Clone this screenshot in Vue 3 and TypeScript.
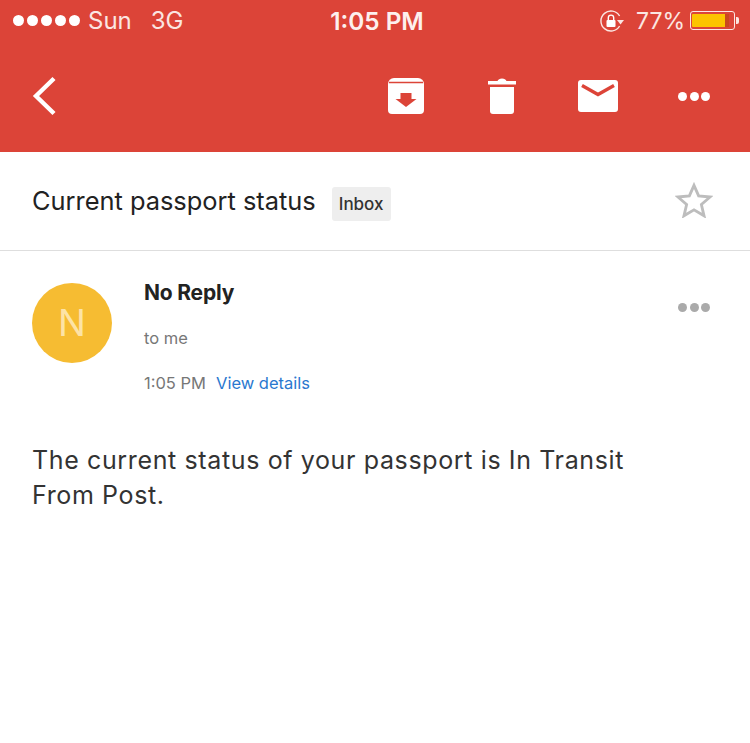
<script setup lang="ts">
const signalDots = [1, 2, 3, 4, 5]
const moreDots = [1, 2, 3]
</script>

<template>
  <div class="screen">
    <header class="top">
      <div class="status">
        <div class="status-left">
          <span class="signal"><i v-for="d in signalDots" :key="d"></i></span>
          <span class="carrier">Sun</span>
          <span class="network">3G</span>
        </div>
        <div class="clock">1:05 PM</div>
        <div class="status-right">
          <svg class="rotation" width="24" height="22" viewBox="0 0 24 22">
            <path d="M19.6 6A10 10 0 1 0 19.6 16" fill="none" stroke="#fbe6e2" stroke-width="1.400" />
            <path d="M17 10h7l-3.500 4.500z" fill="#fbe6e2" />
            <rect x="6.500" y="10" width="9" height="7" rx="1" fill="#fff" />
            <path d="M8.300 10V7.800a2.700 2.700 0 0 1 5.400 0V10" fill="none" stroke="#fff" stroke-width="1.400" />
          </svg>
          <span class="percent">77%</span>
          <span class="battery"><span class="level"></span></span>
          <span class="nub"></span>
        </div>
      </div>
      <div class="toolbar">
        <svg class="back" width="24" height="40" viewBox="0 0 24 40">
          <path d="M22 2.500 4 20l18 17.500" fill="none" stroke="#fff" stroke-width="4.400" />
        </svg>
        <div class="actions">
          <svg class="archive" width="36" height="36" viewBox="0 0 36 36">
            <path d="M6 0h24a6 6 0 0 1 6 6v26a4 4 0 0 1-4 4H4a4 4 0 0 1-4-4V6a6 6 0 0 1 6-6z" fill="#fff" />
            <path d="M1 4.500h34" stroke="#dc4438" stroke-width="1.600" />
            <path d="M12.500 15h11v6h5L18 29 7.500 21h5z" fill="#dc4438" />
          </svg>
          <svg class="trash" width="28" height="36" viewBox="0 0 28 36">
            <path d="M0 3h9.500q1-2.500 4.500-2.500T18.500 3H28v3.600H0z" fill="#fff" />
            <path d="M2 9h24v24a3 3 0 0 1-3 3H5a3 3 0 0 1-3-3z" fill="#fff" />
          </svg>
          <svg class="mail" width="40" height="32" viewBox="0 0 40 32">
            <rect width="40" height="32" rx="3" fill="#fff" />
            <path d="M4 5.500 20 14.500l16-9" fill="none" stroke="#dc4438" stroke-width="3.400" />
          </svg>
          <span class="dots"><i v-for="d in moreDots" :key="d"></i></span>
        </div>
      </div>
    </header>

    <section class="subject">
      <h1>Current passport status</h1>
      <span class="chip">Inbox</span>
      <svg class="star" width="38" height="36" viewBox="0 0 40 38">
        <path d="M20 3.500l4.900 11.200 12.100 1.100-9.200 8 2.800 11.900L20 29.400 9.400 35.700l2.800-11.900-9.200-8 12.100-1.100z" fill="none" stroke="#bdbdbd" stroke-width="3" />
      </svg>
    </section>

    <section class="message">
      <div class="avatar">N</div>
      <div class="meta">
        <div class="sender">No Reply</div>
        <div class="to">to me</div>
        <div class="when">1:05 PM<a class="details">View details</a></div>
      </div>
      <span class="dots grey"><i v-for="d in moreDots" :key="d"></i></span>
    </section>

    <p class="body">The current status of your passport is In Transit<br />From Post.</p>
  </div>
</template>

<style scoped>
.screen {
  width: 750px;
  height: 743px;
  overflow: hidden;
  background: #fff;
  font-family: Inter, "Liberation Sans", sans-serif;
  color: #222;
}

.top {
  background: #dc4438;
  height: 152px;
  color: #fbe6e2;
}

.status {
  height: 41px;
  display: grid;
  grid-template-columns: 1fr auto 1fr;
  align-items: center;
  font-size: 24px;
  padding: 0 11px 0 13px;
}

.status-left,
.status-right,
.signal {
  display: flex;
  align-items: center;
}

.signal {
  gap: 3px;
}

.signal i {
  width: 11px;
  height: 11px;
  border-radius: 50%;
  background: #fff;
}

.carrier {
  margin-left: 8px;
}

.network {
  margin-left: 19px;
}

.clock {
  padding-left: 2px;
  font-size: 24.300px;
  font-weight: 600;
  color: #fdf0ee;
}

.status-right {
  justify-content: flex-end;
}

.percent {
  margin-left: 12px;
  font-size: 23px;
}

.battery {
  margin-left: 5px;
  width: 45px;
  height: 19px;
  box-sizing: border-box;
  border: 1px solid #fbe6e2;
  border-radius: 3px;
  padding: 2px 2px 2px 1px;
}

.level {
  display: block;
  width: 33px;
  height: 100%;
  background: #fcc400;
  border-right: 4px solid #c9481f;
  border-radius: 1px 0 0 1px;
}

.nub {
  width: 3px;
  height: 7px;
  margin-left: 1px;
  background: #fbe6e2;
  border-radius: 0 2px 2px 0;
}

.toolbar {
  display: flex;
  align-items: center;
  justify-content: space-between;
  padding: 35px 40px 0 32px;
}

.actions {
  display: flex;
  align-items: center;
  gap: 64px;
}

.dots {
  display: flex;
  gap: 2.500px;
}

.dots i {
  width: 9px;
  height: 9px;
  border-radius: 50%;
  background: #fff;
}

.actions .trash {
  margin-right: -2px;
}

.actions .dots {
  margin-left: -4px;
}

.subject {
  height: 99px;
  box-sizing: border-box;
  border-bottom: 1px solid #dedede;
  display: flex;
  align-items: center;
  padding: 0 37px 2px 32px;
}

.subject h1 {
  margin: 0;
  font-size: 25.400px;
  font-weight: 400;
  color: #222;
}

.chip {
  margin: 8px 0 0 16px;
  padding: 0 7px;
  line-height: 34px;
  font-size: 17px;
  font-weight: 500;
  color: #333;
  background: #eee;
  border-radius: 3px;
}

.star {
  margin-left: auto;
}

.message {
  display: flex;
  align-items: flex-start;
  padding: 32px 40px 0 32px;
}

.avatar {
  width: 80px;
  height: 80px;
  border-radius: 50%;
  background: #f6bc32;
  color: #fde3a6;
  font-size: 37px;
  line-height: 80px;
  text-align: center;
}

.meta {
  margin-left: 32px;
  flex: 1;
}

.sender {
  font-size: 21px;
  font-weight: 700;
  line-height: 20px;
  letter-spacing: -0.200px;
  color: #222;
}

.to {
  margin-top: 23px;
  font-size: 16.500px;
  line-height: 24px;
  color: #777;
}

.when {
  margin-top: 21px;
  font-size: 16.500px;
  line-height: 24px;
  color: #777;
}

.details {
  margin-left: 10px;
  color: #2a78cf;
}

.dots.grey {
  margin-top: 20px;
}

.dots.grey i {
  background: #aaa;
}

.body {
  margin: 48px 0 0;
  padding-left: 32px;
  font-size: 25px;
  line-height: 34.500px;
  letter-spacing: 0.630px;
  color: #333;
}
</style>
